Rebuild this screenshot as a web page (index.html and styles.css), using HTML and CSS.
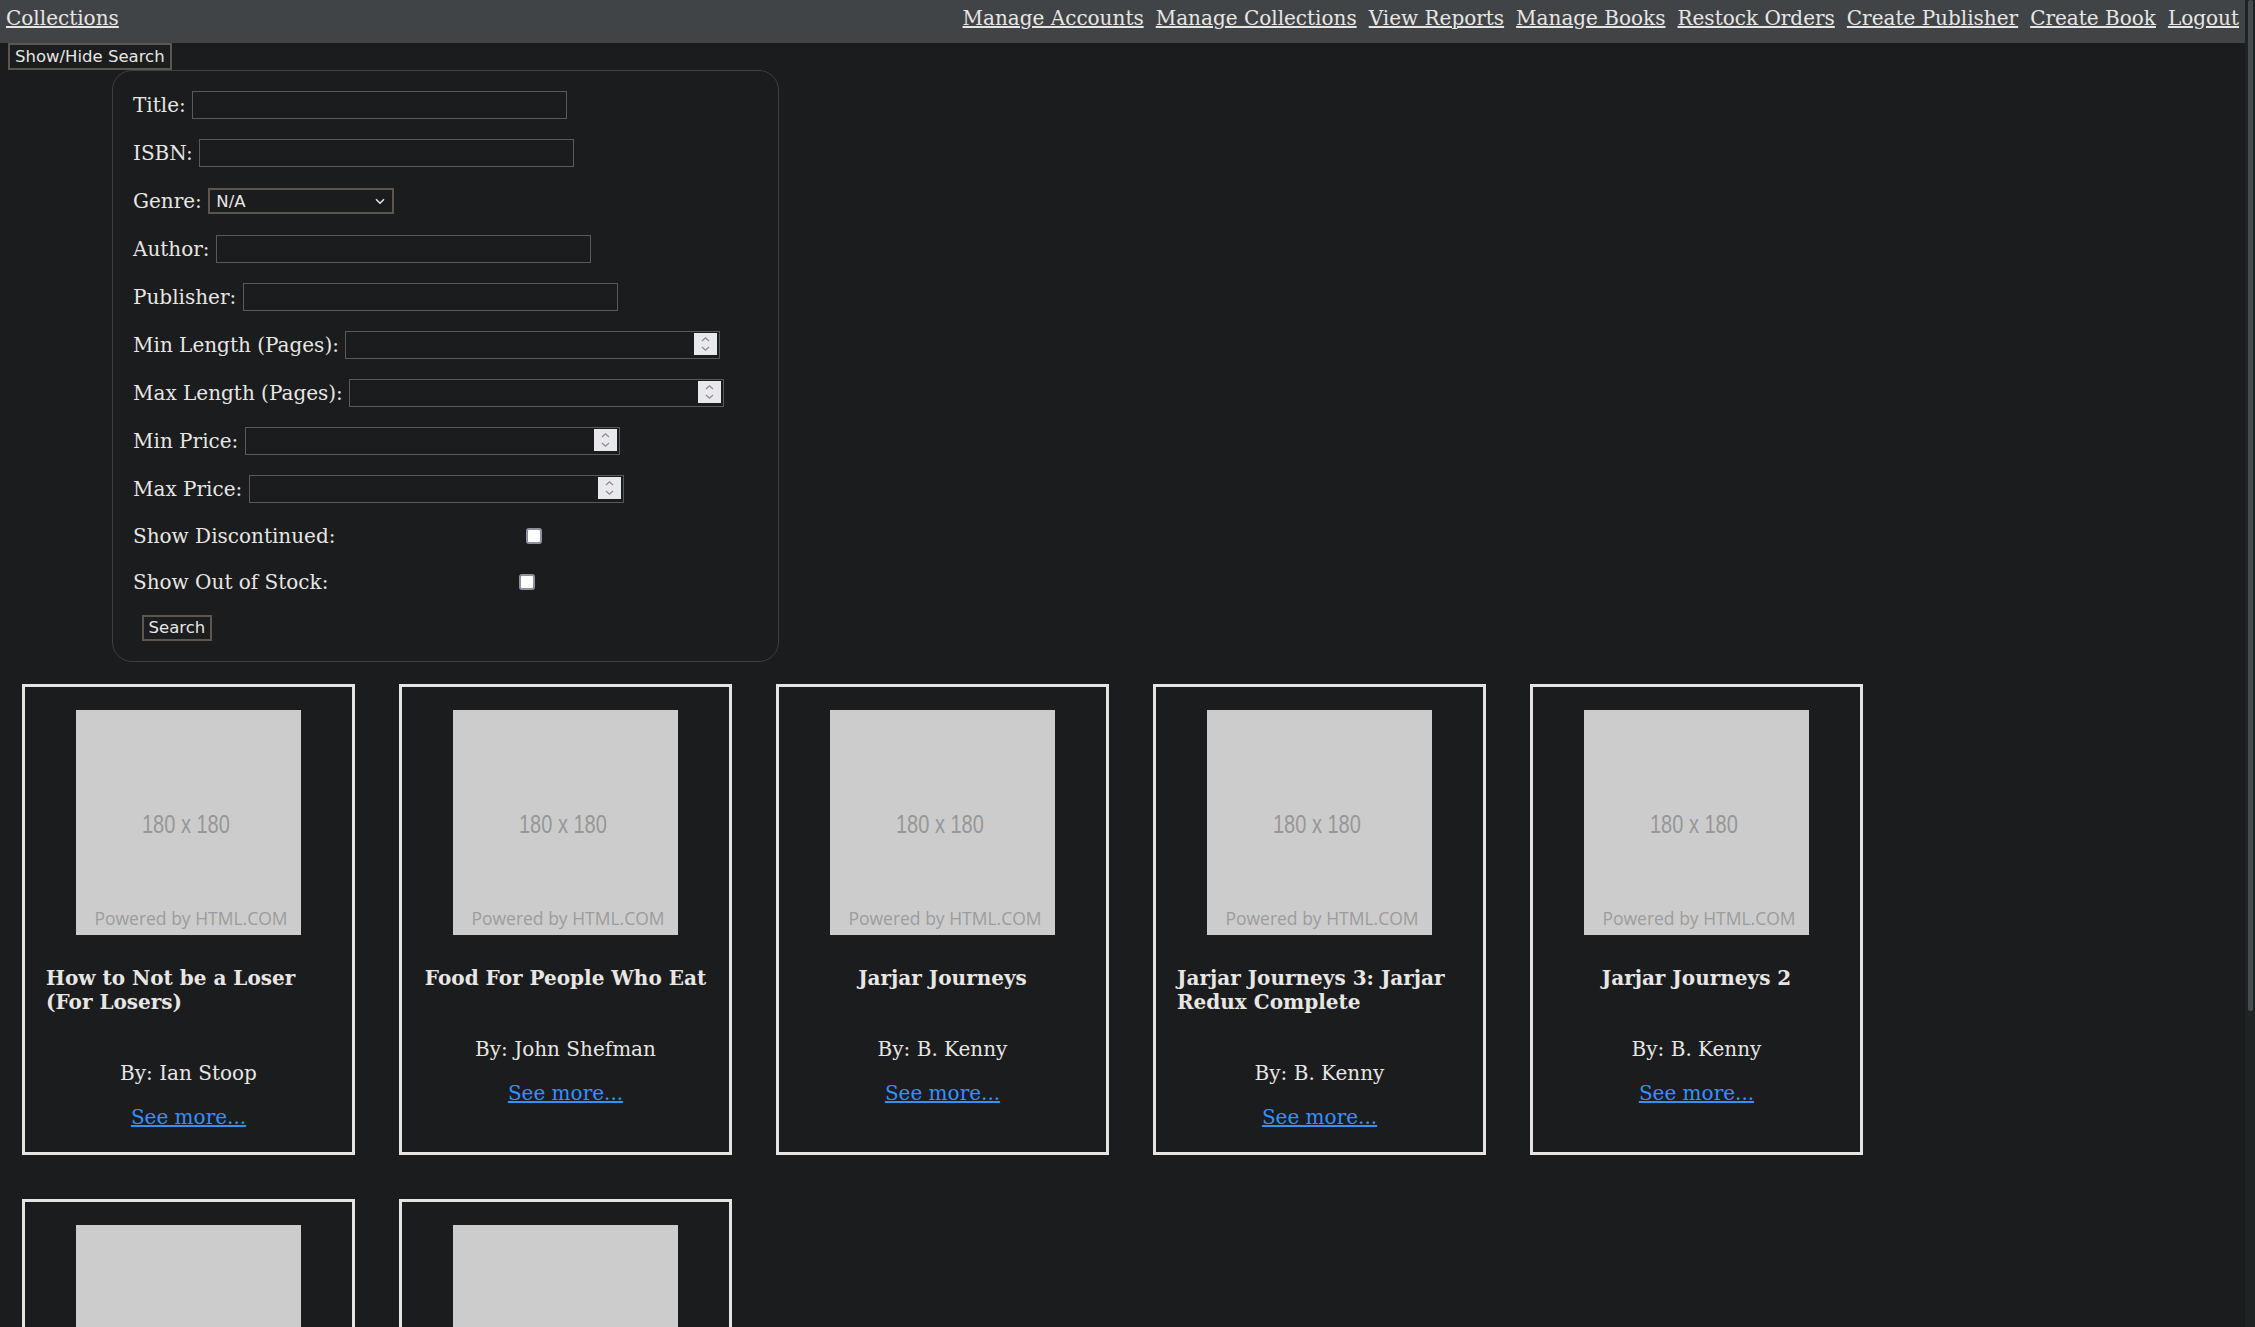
FILE: index.html
```html
<!DOCTYPE html>
<html lang="en">
<head>
<meta charset="utf-8">
<title>Collections</title>
<link rel="stylesheet" href="styles.css">
</head>
<body>
<header class="topbar">
  <a href="#" class="brand">Collections</a>
  <nav class="nav">
    <a href="#">Manage Accounts</a>
    <a href="#">Manage Collections</a>
    <a href="#">View Reports</a>
    <a href="#">Manage Books</a>
    <a href="#">Restock Orders</a>
    <a href="#">Create Publisher</a>
    <a href="#">Create Book</a>
    <a href="#">Logout</a>
  </nav>
</header>

<button class="toggle" type="button">Show/Hide Search</button>

<form class="search">
  <div class="row"><label>Title:</label><input class="field" type="text"></div>
  <div class="row"><label>ISBN:</label><input class="field" type="text"></div>
  <div class="row"><label>Genre:</label>
    <span class="select-wrap">
      <select class="select"><option>N/A</option></select>
      <svg class="chev" width="10" height="7" viewBox="0 0 10 7"><polyline points="1,1.2 5,5.2 9,1.2" fill="none" stroke="#e8e6e3" stroke-width="1.5"/></svg>
    </span>
  </div>
  <div class="row"><label>Author:</label><input class="field" type="text"></div>
  <div class="row"><label>Publisher:</label><input class="field" type="text"></div>
  <div class="row"><label>Min Length (Pages):</label>
    <span class="num-wrap"><input class="field num" type="number"><svg class="spin" width="23" height="22" viewBox="0 0 23 22"><rect width="23" height="22" fill="#e9e9ed"/><polyline points="8,8 11.5,4.8 15,8" fill="none" stroke="#8a8a8f" stroke-width="1.2"/><polyline points="8,14 11.5,17.2 15,14" fill="none" stroke="#8a8a8f" stroke-width="1.2"/></svg></span>
  </div>
  <div class="row"><label>Max Length (Pages):</label>
    <span class="num-wrap"><input class="field num" type="number"><svg class="spin" width="23" height="22" viewBox="0 0 23 22"><rect width="23" height="22" fill="#e9e9ed"/><polyline points="8,8 11.5,4.8 15,8" fill="none" stroke="#8a8a8f" stroke-width="1.2"/><polyline points="8,14 11.5,17.2 15,14" fill="none" stroke="#8a8a8f" stroke-width="1.2"/></svg></span>
  </div>
  <div class="row"><label>Min Price:</label>
    <span class="num-wrap"><input class="field num" type="number"><svg class="spin" width="23" height="22" viewBox="0 0 23 22"><rect width="23" height="22" fill="#e9e9ed"/><polyline points="8,8 11.5,4.8 15,8" fill="none" stroke="#8a8a8f" stroke-width="1.2"/><polyline points="8,14 11.5,17.2 15,14" fill="none" stroke="#8a8a8f" stroke-width="1.2"/></svg></span>
  </div>
  <div class="row"><label>Max Price:</label>
    <span class="num-wrap"><input class="field num" type="number"><svg class="spin" width="23" height="22" viewBox="0 0 23 22"><rect width="23" height="22" fill="#e9e9ed"/><polyline points="8,8 11.5,4.8 15,8" fill="none" stroke="#8a8a8f" stroke-width="1.2"/><polyline points="8,14 11.5,17.2 15,14" fill="none" stroke="#8a8a8f" stroke-width="1.2"/></svg></span>
  </div>
  <div class="row row-check"><label>Show Discontinued:</label><span class="check-wrap"><input class="check" type="checkbox"></span></div>
  <div class="row row-check"><label>Show Out of Stock:</label><span class="check-wrap"><input class="check" type="checkbox"></span></div>
  <div class="row row-btn"><button class="btn" type="button">Search</button></div>
</form>

<main class="books">
  <article class="card">
    <div class="ph"><span class="ph-size">180 x 180</span><span class="ph-credit">Powered by HTML.COM</span></div>
    <h4 class="card-title">How to Not be a Loser (For Losers)</h4>
    <p class="card-author">By: Ian Stoop</p>
    <a class="card-link" href="#">See more...</a>
  </article>
  <article class="card">
    <div class="ph"><span class="ph-size">180 x 180</span><span class="ph-credit">Powered by HTML.COM</span></div>
    <h4 class="card-title">Food For People Who Eat</h4>
    <p class="card-author">By: John Shefman</p>
    <a class="card-link" href="#">See more...</a>
  </article>
  <article class="card">
    <div class="ph"><span class="ph-size">180 x 180</span><span class="ph-credit">Powered by HTML.COM</span></div>
    <h4 class="card-title">Jarjar Journeys</h4>
    <p class="card-author">By: B. Kenny</p>
    <a class="card-link" href="#">See more...</a>
  </article>
  <article class="card">
    <div class="ph"><span class="ph-size">180 x 180</span><span class="ph-credit">Powered by HTML.COM</span></div>
    <h4 class="card-title">Jarjar Journeys 3: Jarjar Redux Complete</h4>
    <p class="card-author">By: B. Kenny</p>
    <a class="card-link" href="#">See more...</a>
  </article>
  <article class="card">
    <div class="ph"><span class="ph-size">180 x 180</span><span class="ph-credit">Powered by HTML.COM</span></div>
    <h4 class="card-title">Jarjar Journeys 2</h4>
    <p class="card-author">By: B. Kenny</p>
    <a class="card-link" href="#">See more...</a>
  </article>
  <article class="card">
    <div class="ph"><span class="ph-size">180 x 180</span><span class="ph-credit">Powered by HTML.COM</span></div>
    <h4 class="card-title">Jarjar Journeys 4</h4>
    <p class="card-author">By: B. Kenny</p>
    <a class="card-link" href="#">See more...</a>
  </article>
  <article class="card">
    <div class="ph"><span class="ph-size">180 x 180</span><span class="ph-credit">Powered by HTML.COM</span></div>
    <h4 class="card-title">Eating For People Who Cook</h4>
    <p class="card-author">By: John Shefman</p>
    <a class="card-link" href="#">See more...</a>
  </article>
</main>

<div class="scrollbar" aria-hidden="true"><div class="scrollbar-thumb"></div></div>
</body>
</html>
```

FILE: styles.css
```css
html {
  background: #1a1c1e;
  scrollbar-width: none;
}

body {
  margin: 0;
  padding-right: 10px;
  background: #1a1c1e;
  color: #e8e6e3;
  font-family: "DejaVu Serif", serif;
  font-size: 20px;
  line-height: 23px;
}

a {
  color: #e8e6e3;
}

/* window scrollbar, drawn over the right edge */
.scrollbar {
  position: fixed;
  top: 0;
  right: 0;
  width: 10px;
  height: 100vh;
  background: #202324;
}

.scrollbar-thumb {
  height: 1011px;
  margin: 0 2px 0 3px;
  background: #464b4e;
  border-radius: 3px;
}

.topbar {
  display: flex;
  justify-content: space-between;
  align-items: flex-start;
  box-sizing: border-box;
  height: 43px;
  padding: 7px 6px 0 6px;
  background: #404447;
}

.nav {
  display: flex;
  gap: 12px;
}

.toggle {
  display: block;
  box-sizing: border-box;
  height: 27px;
  margin: 0 0 0 8px;
  padding: 0 5px;
  background: #1b1d1e;
  color: #e8e6e3;
  border: 2px solid #5c564d;
  border-radius: 0;
  font-family: "DejaVu Sans", sans-serif;
  font-size: 16.5px;
  line-height: 20px;
}

.search {
  box-sizing: border-box;
  width: 667px;
  margin: 0 0 0 112px;
  padding: 20px;
  border: 1px solid #3b3f42;
  border-radius: 20px;
  display: flex;
  flex-direction: column;
  gap: 20px;
}

.row {
  display: flex;
  align-items: center;
  gap: 6.5px;
  height: 28px;
}

.row-check,
.row-btn {
  height: 26px;
}

.field {
  box-sizing: border-box;
  width: 375px;
  height: 28px;
  margin: 0;
  padding: 0 4px;
  background: #1a1c1e;
  color: #e8e6e3;
  border: 1px solid #545b5e;
  border-radius: 0;
  font-family: "DejaVu Sans", sans-serif;
  font-size: 16px;
}

.num {
  appearance: textfield;
  -moz-appearance: textfield;
}
.num::-webkit-inner-spin-button,
.num::-webkit-outer-spin-button {
  -webkit-appearance: none;
  margin: 0;
}

.num-wrap,
.select-wrap {
  position: relative;
  display: inline-flex;
}

.spin {
  position: absolute;
  top: 2px;
  right: 3px;
}

.select {
  appearance: none;
  -webkit-appearance: none;
  box-sizing: border-box;
  width: 186px;
  height: 26px;
  margin: 0;
  padding: 0 0 0 6px;
  background: #1a1c1e;
  color: #e8e6e3;
  border: 2px solid #5c564d;
  border-radius: 0;
  font-family: "DejaVu Sans", sans-serif;
  font-size: 16.5px;
}

.chev {
  position: absolute;
  right: 9px;
  top: 10px;
  pointer-events: none;
}

.check-wrap {
  display: flex;
  justify-content: center;
  width: 384px;
}

.check {
  appearance: none;
  -webkit-appearance: none;
  box-sizing: border-box;
  width: 16px;
  height: 16px;
  margin: 0;
  background: #ffffff;
  border: 2px solid #8f8f9d;
  border-radius: 3px;
}

.btn {
  box-sizing: border-box;
  height: 26px;
  margin: 0 0 0 9px;
  padding: 0 4.5px;
  background: #1b1d1e;
  color: #e8e6e3;
  border: 2px solid #5c564d;
  border-radius: 0;
  font-family: "DejaVu Sans", sans-serif;
  font-size: 16.5px;
  line-height: 20px;
}

.books {
  display: flex;
  flex-wrap: wrap;
  gap: 44px;
  padding: 22px;
}

.card {
  box-sizing: border-box;
  width: 333px;
  padding: 23px 21px;
  border: 3px solid #e6e4e0;
  display: flex;
  flex-direction: column;
  align-items: center;
}

.ph {
  position: relative;
  flex: none;
  width: 225px;
  height: 225px;
  background: #cccccc;
  display: flex;
  align-items: center;
  justify-content: center;
}

.ph-size {
  display: block;
  padding-top: 3px;
  margin-left: -6px;
  color: #979797;
  font-family: "Liberation Sans", sans-serif;
  font-size: 25px;
  line-height: 28px;
  transform: scaleX(0.8);
}

.ph-credit {
  position: absolute;
  left: 0;
  right: 0;
  bottom: 5px;
  text-align: center;
  padding-left: 5px;
  color: #9c9c9c;
  font-family: "Open Sans", sans-serif;
  font-size: 17.5px;
  line-height: 24px;
}

.card-title {
  margin: 31px 0 0 0;
  font-size: 20px;
  font-weight: bold;
  line-height: 24px;
  text-align: left;
}

.card-author {
  margin: 47px 0 0 0;
  line-height: 24px;
}

.card-link {
  margin-top: 20px;
  line-height: 24px;
  color: #3391ff;
}
```
